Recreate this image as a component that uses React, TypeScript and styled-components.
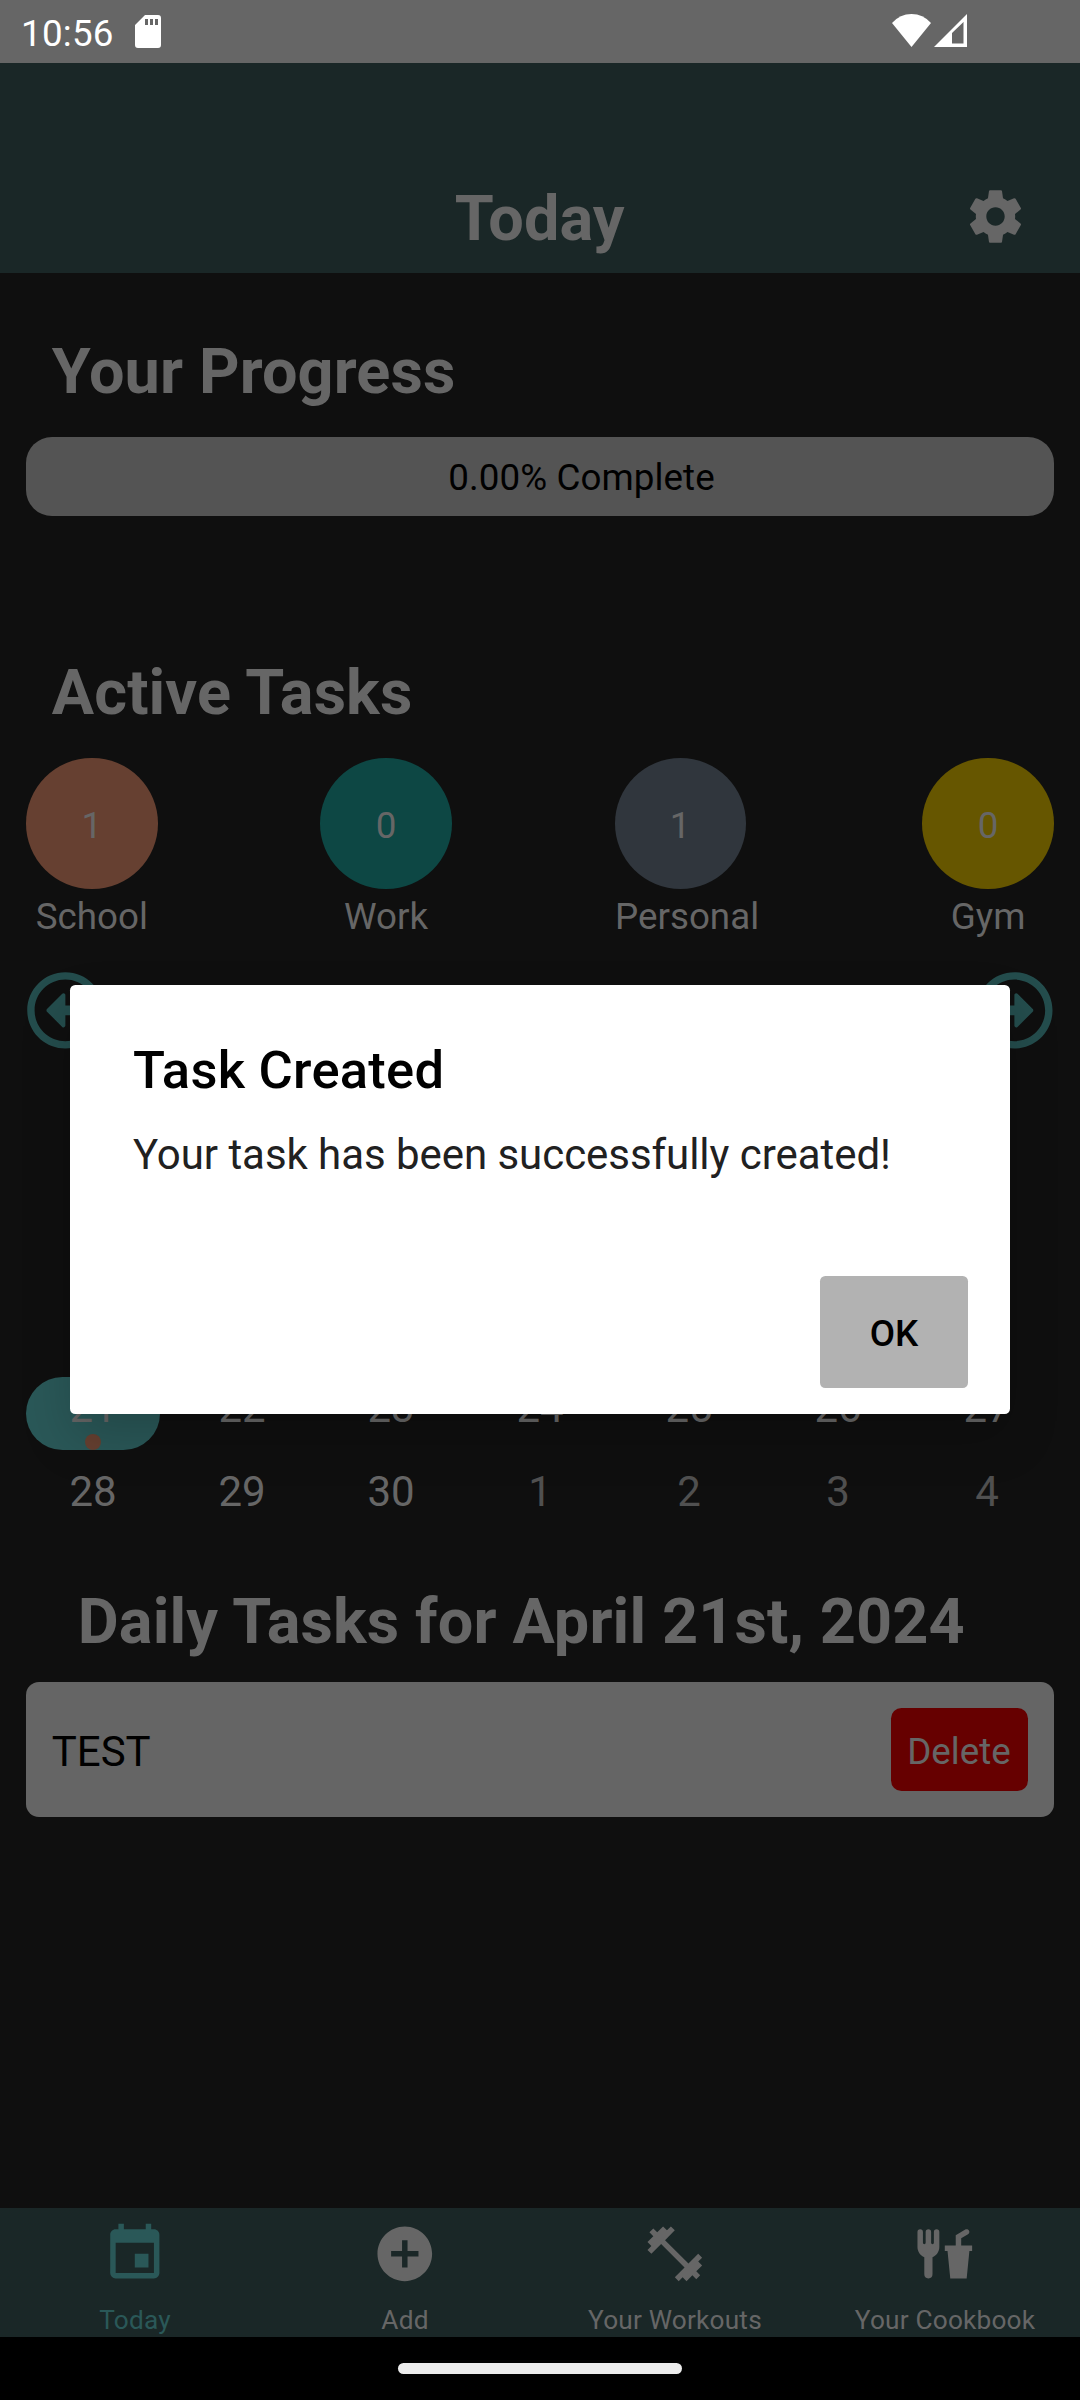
import React from "react";
import styled, { createGlobalStyle } from "styled-components";
import { MdEvent, MdAddCircle, MdFitnessCenter } from "react-icons/md";
import { FaRegArrowAltCircleLeft, FaRegArrowAltCircleRight } from "react-icons/fa";

const GlobalStyle = createGlobalStyle`
  *, *::before, *::after { box-sizing: border-box; }
  body {
    margin: 0;
    background: #0f0f0f;
    font-family: Roboto, "Liberation Sans", sans-serif;
    color: #666666;
  }
`;

const Screen = styled.div`
  position: relative;
  display: flex;
  flex-direction: column;
  width: 1080px;
  height: 2400px;
  overflow: hidden;
  background: #0f0f0f;
`;

const StatusBar = styled.div`
  display: flex;
  align-items: center;
  height: 63px;
  padding: 0 113px 0 21px;
  background: #666666;
  color: #ffffff;
  font-size: 36.75px;
`;

const Clock = styled.span`
  width: 114px;
  padding-top: 3px;
  line-height: 43px;
  letter-spacing: 0.25px;
`;

const StatusIcons = styled.div`
  display: flex;
  gap: 3px;
  margin-left: auto;
  padding-bottom: 2px;
`;

const Header = styled.header`
  display: grid;
  grid-template-columns: 1fr auto 1fr;
  align-items: end;
  height: 210px;
  padding: 0 53px 17px 52px;
  background: #1a2727;
`;

const Title = styled.h1`
  grid-column: 2;
  margin: 0;
  font-size: 63px;
  line-height: 74px;
  font-weight: 700;
`;

const SettingsButton = styled.div`
  display: flex;
  justify-self: end;
  padding-bottom: 8px;
  font-size: 63px;
`;

const Content = styled.main`
  flex: 1;
  display: flex;
  flex-direction: column;
  padding: 0 26.25px;
`;

const Heading = styled.h2<{ $top: number; $indent?: number }>`
  margin: ${(p) => p.$top}px 0 0 ${(p) => p.$indent ?? 25.5}px;
  font-size: 63px;
  line-height: 74px;
  font-weight: 700;
  letter-spacing: 0.12px;
  white-space: nowrap;
`;

const ProgressTrack = styled.div`
  display: flex;
  justify-content: center;
  align-items: center;
  height: 79px;
  margin-top: 28px;
  padding: 2px 0 0 83px;
  border-radius: 26px;
  background: #545454;
  color: #000000;
  font-size: 36.75px;
  letter-spacing: 0.08px;
`;

const Categories = styled.div`
  display: flex;
  justify-content: space-between;
  margin-top: 28px;
`;

const Category = styled.div<{ $width?: number }>`
  width: ${(p) => p.$width ?? 131.25}px;
  font-size: 36.75px;
  line-height: 43px;
  text-align: center;
`;

const Count = styled.div<{ $color: string }>`
  display: flex;
  align-items: center;
  justify-content: center;
  width: 131.25px;
  height: 131.25px;
  margin-bottom: 6px;
  padding-top: 3px;
  border-radius: 50%;
  background: ${(p) => p.$color};
`;

const MonthNav = styled.div`
  display: flex;
  justify-content: space-between;
  margin: 32.5px 0 327.5px;
  color: #244d4d;
  font-size: 78.75px;
`;

const Week = styled.div`
  display: grid;
  grid-template-columns: repeat(7, 133.5px);
  justify-content: space-between;
  height: 73px;
  margin-bottom: 11px;
`;

const Day = styled.div<{ $selected?: boolean; $outside?: boolean }>`
  display: flex;
  flex-direction: column;
  align-items: center;
  height: 73px;
  padding-top: 6px;
  border-radius: 36.5px;
  background: ${(p) => (p.$selected ? "#2a5858" : "transparent")};
  color: ${(p) => (p.$outside ? "#505050" : "#666666")};
  font-size: 42px;
  line-height: 49px;
`;

const Dot = styled.span`
  width: 16px;
  height: 16px;
  margin-top: 2px;
  border-radius: 50%;
  background: #664031;
`;

const TaskCard = styled.div`
  display: flex;
  align-items: center;
  justify-content: space-between;
  height: 135px;
  margin-top: 23px;
  padding: 0 26.25px 0 25.5px;
  border-radius: 13px;
  background: #656565;
`;

const TaskName = styled.span`
  padding-top: 4px;
  color: #000000;
  font-size: 42px;
  line-height: 49px;
`;

const DeleteButton = styled.div`
  display: flex;
  align-items: center;
  justify-content: center;
  width: 137px;
  height: 83px;
  padding-top: 3px;
  border-radius: 10.5px;
  background: #660000;
  color: #666666;
  font-size: 36.75px;
`;

const TabBar = styled.nav`
  display: grid;
  grid-template-columns: repeat(4, 1fr);
  height: 129px;
  background: #1a2727;
`;

const Tab = styled.div<{ $active?: boolean }>`
  display: flex;
  flex-direction: column;
  align-items: center;
  padding-top: 13px;
  color: ${(p) => (p.$active ? "#2a5858" : "#666666")};
  font-size: 65.6px;
`;

const TabLabel = styled.span`
  margin-top: 18px;
  font-size: 26.25px;
  line-height: 31px;
  letter-spacing: 0.18px;
`;

const SystemNav = styled.div`
  display: flex;
  justify-content: center;
  height: 63px;
  padding-top: 26px;
  background: #000000;
`;

const HomeHandle = styled.div`
  width: 284px;
  height: 11px;
  border-radius: 5.5px;
  background: #ececec;
`;

const Dialog = styled.div`
  position: absolute;
  top: 985px;
  left: 70px;
  display: flex;
  flex-direction: column;
  width: 940px;
  height: 429px;
  padding: 54px 42px 26px 63px;
  border-radius: 5.25px;
  background: #ffffff;
  box-shadow: 0 24px 50px rgba(0, 0, 0, 0.18);
`;

const DialogTitle = styled.div`
  color: #000000;
  font-size: 52.5px;
  line-height: 62px;
  font-weight: 500;
  letter-spacing: 0.25px;
`;

const DialogMessage = styled.div`
  margin-top: 29px;
  color: #212121;
  font-size: 42px;
  line-height: 49px;
  letter-spacing: -0.05px;
`;

const DialogButton = styled.div`
  display: flex;
  align-items: center;
  justify-content: center;
  align-self: flex-end;
  width: 148px;
  height: 112px;
  margin-top: auto;
  padding-top: 3px;
  border-radius: 5.25px;
  background: #b2b2b2;
  color: #000000;
  font-size: 36.75px;
  font-weight: 500;
`;

const categories = [
  { name: "School", count: 1, color: "#664031" },
  { name: "Work", count: 0, color: "#0d4744" },
  { name: "Personal", count: 1, color: "#30363d", width: 145 },
  { name: "Gym", count: 0, color: "#665600" },
];

const SdCard = () => (
  <svg width="26" height="33" viewBox="0 0 26 33" fill="#fff">
    <path
      fillRule="evenodd"
      d="M10 0H23Q26 0 26 3V30Q26 33 23 33H3Q0 33 0 30V10ZM10 4V10H13V4ZM15 4V10H18V4ZM20 4V10H23V4Z"
    />
  </svg>
);

const Wifi = () => (
  <svg width="39" height="33" viewBox="0 0 39 33" fill="#fff">
    <path d="M0 9Q8 0 19.5 0T39 9L19.5 33Z" />
  </svg>
);

const Signal = () => (
  <svg width="33" height="33" viewBox="0 0 33 33" fill="#fff">
    <path fillRule="evenodd" d="M0 33L33 0V33ZM18 19V29.5H29.5V8Z" />
  </svg>
);

const Gear = () => (
  <svg width="1em" height="1em" viewBox="0 0 24 24" fill="currentColor">
    <path d="M19.43 12.98c.04-.32.07-.64.07-.98s-.03-.66-.07-.98l2.11-1.65c.19-.15.24-.42.12-.64l-2-3.46c-.12-.22-.39-.3-.61-.22l-2.49 1c-.52-.4-1.08-.73-1.69-.98l-.38-2.65C14.46 2.18 14.25 2 14 2h-4c-.25 0-.46.18-.49.42l-.38 2.65c-.61.25-1.17.59-1.69.98l-2.49-1c-.23-.09-.49 0-.61.22l-2 3.46c-.13.22-.07.49.12.64l2.11 1.65c-.04.32-.07.65-.07.98s.03.66.07.98l-2.11 1.65c-.19.15-.24.42-.12.64l2 3.46c.12.22.39.3.61.22l2.49-1c.52.4 1.08.73 1.69.98l.38 2.65c.03.24.24.42.49.42h4c.25 0 .46-.18.49-.42l.38-2.65c.61-.25 1.17-.59 1.69-.98l2.49 1c.23.09.49 0 .61-.22l2-3.46c.12-.22.07-.49-.12-.64l-2.11-1.65zM12 15.5c-1.93 0-3.5-1.57-3.5-3.5s1.57-3.5 3.5-3.5 3.5 1.57 3.5 3.5-1.57 3.5-3.5 3.5z" />
  </svg>
);

const ForkDrink = () => (
  <svg width="1em" height="1em" viewBox="0 0 24 24" fill="currentColor">
    <path d="M3,3A1,1 0 0,0 2,4V8L2,9.5C2,11.19 3.03,12.63 4.5,13.22V19.5A1.5,1.5 0 0,0 6,21A1.5,1.5 0 0,0 7.5,19.5V13.22C8.97,12.63 10,11.19 10,9.5V8L10,4A1,1 0 0,0 9,3A1,1 0 0,0 8,4V8A0.5,0.5 0 0,1 7.5,8.5A0.5,0.5 0 0,1 7,8V4A1,1 0 0,0 6,3A1,1 0 0,0 5,4V8A0.5,0.5 0 0,1 4.5,8.5A0.5,0.5 0 0,1 4,8V4A1,1 0 0,0 3,3M19.88,3C19.75,3 19.62,3.04 19.5,3.1L16,5.25V9H12V11H13L14,21H20L21,11H22V9H18V6.34L20.5,4.84C21,4.56 21.13,4 20.84,3.5C20.63,3.14 20.26,2.95 19.88,3Z" />
  </svg>
);

export default function App() {
  return (
    <Screen>
      <GlobalStyle />
      <StatusBar>
        <Clock>10:56</Clock>
        <SdCard />
        <StatusIcons>
          <Wifi />
          <Signal />
        </StatusIcons>
      </StatusBar>
      <Header>
        <Title>Today</Title>
        <SettingsButton>
          <Gear />
        </SettingsButton>
      </Header>
      <Content>
        <Heading $top={62}>Your Progress</Heading>
        <ProgressTrack>0.00% Complete</ProgressTrack>
        <Heading $top={140}>Active Tasks</Heading>
        <Categories>
          {categories.map((c) => (
            <Category key={c.name} $width={c.width}>
              <Count $color={c.color}>{c.count}</Count>
              {c.name}
            </Category>
          ))}
        </Categories>
        <MonthNav>
          <FaRegArrowAltCircleLeft />
          <FaRegArrowAltCircleRight />
        </MonthNav>
        <Week>
          {[21, 22, 23, 24, 25, 26, 27].map((d) => (
            <Day key={d} $selected={d === 21}>
              {d}
              {d === 21 && <Dot />}
            </Day>
          ))}
        </Week>
        <Week>
          {[28, 29, 30, 1, 2, 3, 4].map((d) => (
            <Day key={d} $outside={d < 28}>
              {d}
            </Day>
          ))}
        </Week>
        <Heading $top={40} $indent={51.5}>
          Daily Tasks for April 21st, 2024
        </Heading>
        <TaskCard>
          <TaskName>TEST</TaskName>
          <DeleteButton>Delete</DeleteButton>
        </TaskCard>
      </Content>
      <TabBar>
        <Tab $active>
          <MdEvent />
          <TabLabel>Today</TabLabel>
        </Tab>
        <Tab>
          <MdAddCircle />
          <TabLabel>Add</TabLabel>
        </Tab>
        <Tab>
          <MdFitnessCenter />
          <TabLabel>Your Workouts</TabLabel>
        </Tab>
        <Tab>
          <ForkDrink />
          <TabLabel>Your Cookbook</TabLabel>
        </Tab>
      </TabBar>
      <SystemNav>
        <HomeHandle />
      </SystemNav>
      <Dialog>
        <DialogTitle>Task Created</DialogTitle>
        <DialogMessage>Your task has been successfully created!</DialogMessage>
        <DialogButton>OK</DialogButton>
      </Dialog>
    </Screen>
  );
}
